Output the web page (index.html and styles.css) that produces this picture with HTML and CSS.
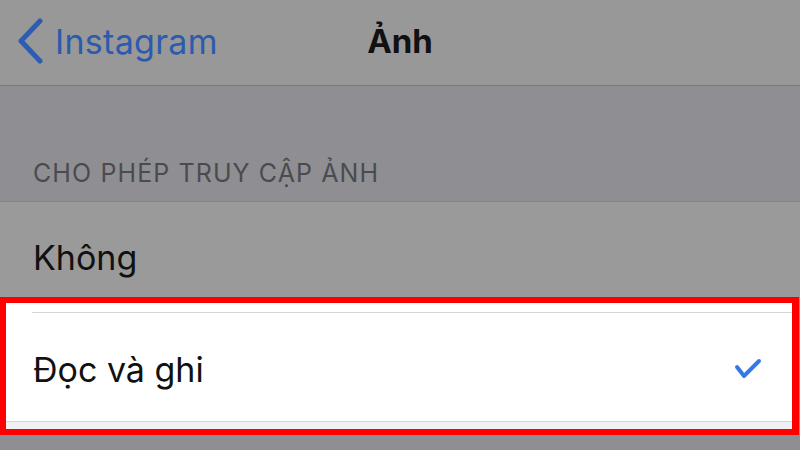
FILE: index.html
```html
<!DOCTYPE html>
<html lang="vi">
<head>
    <meta charset="UTF-8">
    <meta name="viewport" content="width=device-width, initial-scale=1.0">
    <title>Ảnh</title>
    <link rel="stylesheet" href="styles.css">
</head>
<body>
    <!-- Navigation bar -->
    <div class="navbar">
        <div class="back">
            <svg class="chevron" width="28" height="46" viewBox="0 0 28 46">
                <path d="M23 3 L4 23 L23 43" fill="none" stroke="#2d5cb3" stroke-width="5" stroke-linecap="round" stroke-linejoin="round"/>
            </svg>
            <span class="back-label">Instagram</span>
        </div>
        <div class="title">Ảnh</div>
    </div>

    <!-- Section -->
    <div class="section-header">CHO PHÉP TRUY CẬP ẢNH</div>
    <div class="list">
        <div class="row">Không</div>
        <div class="highlight">
            <div class="row row-selected">
                <span>Đọc và ghi</span>
                <svg class="check" width="30" height="24" viewBox="0 0 30 24">
                    <path d="M4 10 L11 19 L26 4" fill="none" stroke="#3479e8" stroke-width="4" stroke-linecap="round" stroke-linejoin="round"/>
                </svg>
            </div>
            <div class="band"></div>
        </div>
    </div>
</body>
</html>
```

FILE: styles.css
```css
/* General Styles */
body {
    margin: 0;
    font-family: Inter, "Noto Sans", sans-serif;
    background-color: #8f8f93;
    height: 450px;
    overflow: hidden;
}

.navbar {
    position: relative;
    height: 85px;
    background-color: #989899;
    border-bottom: 1px solid #7b7b7d;
    display: flex;
    align-items: center;
}

.back {
    display: flex;
    align-items: center;
    padding-left: 17px;
    padding-bottom: 3px;
}

.chevron {
    margin-right: 10px;
}

.back-label {
    font-size: 34px;
    color: #2c5aad;
    letter-spacing: 0.3px;
}

.title {
    position: absolute;
    left: 0;
    right: 0;
    top: 0;
    height: 82px;
    line-height: 82px;
    text-align: center;
    font-size: 33px;
    font-weight: 700;
    color: #111;
}

.section-header {
    height: 116px;
    box-sizing: border-box;
    padding: 0 0 13px 33px;
    display: flex;
    align-items: flex-end;
    font-size: 25px;
    color: #4b4b4f;
    letter-spacing: 1.1px;
    border-bottom: 1px solid #858588;
}

.row {
    height: 95px;
    box-sizing: border-box;
    padding: 16px 0 0 33px;
    display: flex;
    align-items: center;
    font-size: 34px;
    color: #111;
    background-color: #9a9a9a;
}

.highlight {
    border: 6px solid #ff0000;
    border-right-width: 7px;
    margin-right: 1px;
    background-color: #fff;
    padding-top: 9px;
}

.row.row-selected {
    height: 109px;
    padding: 4px 29px 0 1px;
    margin-left: 26px;
    background-color: #fff;
    border-top: 1px solid #d6d6d8;
    justify-content: space-between;
}

.band {
    height: 7px;
    background-color: #efeff4;
    border-top: 1px solid #d6d6d8;
}
```
